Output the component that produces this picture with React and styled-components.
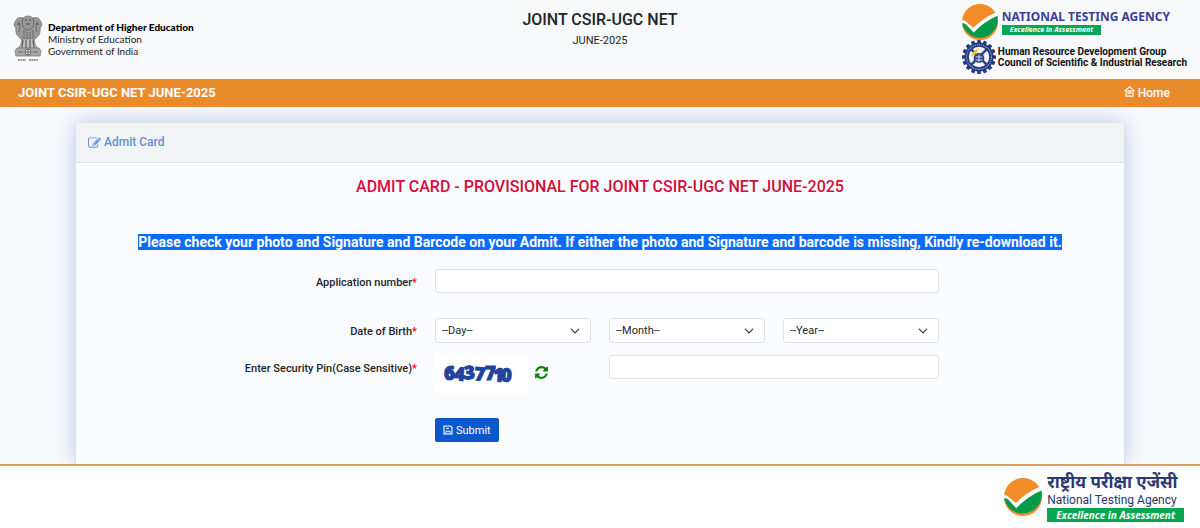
import React from "react";
import styled, { createGlobalStyle } from "styled-components";

const GlobalStyle = createGlobalStyle`
  * {
    box-sizing: border-box;
  }
  body {
    margin: 0;
    background-color: #f8f9fd;
    color: #212529;
    font-family: Roboto, "Liberation Sans", sans-serif;
    font-size: 12px;
  }
  h1, h2, p {
    margin: 0;
  }
`;

const NtaMark = ({ size }) => (
  <svg width={size} height={size} viewBox="0 0 36 36" aria-hidden="true">
    <circle cx="18" cy="18" r="18" fill="#f28c28" />
    <path d="M0 18.4 L3 18.6 L11.4 26 L35 10.4 A18 18 0 1 1 0 18.4Z" fill="#049a49" />
    <path d="M0 16.6 Q2 15.8 3.6 17.2 L11.2 23.8 Q21 14 33.6 8.4 L35.4 11.8 Q22 17.6 11.6 28.6 L4 20.4 Q2 18.6 0 19.4Z" fill="#fff" />
  </svg>
);

const Emblem = () => (
  <svg width="30" height="48" viewBox="0 0 30 48" aria-hidden="true">
    <g fill="#9a9a9a" stroke="#6a6a6a" strokeWidth="0.7">
      <path d="M10 3 Q15 -1 20 3 Q26 1 28 7 L29 10 L27 13 Q28 19 24 22 L21 25 H9 L6 22 Q2 19 3 13 L1 10 L2 7 Q4 1 10 3Z" />
      <path d="M9 24 H21 L22 29 L25 34 H5 L8 29Z" fill="#c4c4c4" />
      <path d="M4 33 H26 L28 36 L27 41 H3 L2 36Z" fill="#a9a9a9" />
    </g>
    <path d="M10 3 Q8 10 11 13 Q15 17 19 13 Q22 10 20 3 M6 6 Q8 12 6 17 M24 6 Q22 12 24 17 M11 15 V23 M14 17 V24 M17 17 V24 M20 15 V23" fill="none" stroke="#5c5c5c" strokeWidth="0.8" />
    <path d="M12 5 H14 M16 5 H18 M13 9 H17 M4 9 H6 M24 9 H26" stroke="#444" strokeWidth="1.1" />
    <path d="M10 25 L9 33 M13 25 V33 M17 25 V33 M20 25 L21 33" stroke="#666" strokeWidth="1.4" />
    <circle cx="15" cy="37" r="3" fill="#ddd" stroke="#555" strokeWidth="0.8" />
    <path d="M15 34 V40 M12 37 H18 M5 37 H10 M20 37 H25" stroke="#555" strokeWidth="0.8" />
    <path d="M5 45 H13 M16 45 H25" stroke="#777" strokeWidth="1.6" strokeDasharray="2 0.5" />
  </svg>
);

const teeth = Array.from({ length: 16 }, (_, i) => i * 22.5);

const CsirMark = () => (
  <svg width="34" height="34" viewBox="0 0 34 34" aria-hidden="true">
    {teeth.map((a) => (
      <rect key={a} x="15.2" y="0" width="3.6" height="4" rx="0.6" fill="#213a7c" transform={`rotate(${a} 17 17)`} />
    ))}
    <circle cx="17" cy="17" r="14.6" fill="#213a7c" />
    <circle cx="17" cy="17" r="12.4" fill="none" stroke="#aab7d6" strokeWidth="1.2" strokeDasharray="1 1" />
    <circle cx="17" cy="17" r="10.2" fill="#f4f6fb" />
    <path d="M9.6 9.6 L24.4 24.4 M24.4 9.6 L9.6 24.4" stroke="#2b4588" strokeWidth="2.6" />
    <ellipse cx="17" cy="18" rx="5.4" ry="5" fill="#2b4588" />
    <path d="M9.6 17 Q10 10.6 17.4 8 Q14.6 11 14.8 14 Q12 13.6 9.6 17Z" fill="#f3c11b" />
    <path d="M13.6 17 H20.4 M13.6 20 H20.4 M17 14.6 V22" stroke="#dfe5f3" strokeWidth="0.9" />
  </svg>
);

const EditIcon = () => (
  <svg width="13" height="14" viewBox="0 0 1792 1792" fill="currentColor" aria-hidden="true">
    <path d="M888 1184l116-116-152-152-116 116v56h96v96h56zm440-720q-16-16-33 1l-350 350q-17 17-1 33t33-1l350-350q17-17 1-33zm80 594v190q0 119-84.5 203.5t-203.5 84.5h-832q-119 0-203.5-84.5t-84.5-203.5v-832q0-119 84.5-203.5t203.5-84.5h832q63 0 117 25 15 7 18 23 3 17-9 29l-49 49q-14 14-32 8-23-6-45-6h-832q-66 0-113 47t-47 113v832q0 66 47 113t113 47h832q66 0 113-47t47-113v-126q0-13 9-22l64-64q15-15 35-7t20 29zm-96-738l288 288-672 672h-288v-288zm444 132l-92 92-288-288 92-92q28-28 68-28t68 28l152 152q28 28 28 68t-28 68z" />
  </svg>
);

const RefreshIcon = () => (
  <svg width="15" height="15" viewBox="0 0 1792 1792" fill="currentColor" aria-hidden="true">
    <path d="M1639 1056q0 5-1 7-64 268-268 434.5t-478 166.5q-146 0-282.5-55t-243.5-157l-129 129q-19 19-45 19t-45-19-19-45v-448q0-26 19-45t45-19h448q26 0 45 19t19 45-19 45l-137 137q71 66 161 102t187 36q134 0 250-65t186-179q11-17 53-117 8-23 30-23h192q13 0 22.5 9.5t9.5 22.5zm25-800v448q0 26-19 45t-45 19h-448q-26 0-45-19t-19-45 19-45l138-138q-148-137-349-137-134 0-250 65t-186 179q-11 17-53 117-8 23-30 23h-199q-13 0-22.5-9.5t-9.5-22.5v-7q65-268 270-434.5t480-166.5q146 0 284 55.5t245 156.5l130-129q19-19 45-19t45 19 19 45z" />
  </svg>
);

const HomeIcon = () => (
  <svg width="11" height="11" viewBox="0 0 12 12" fill="none" stroke="currentColor" aria-hidden="true">
    <path d="M0.6 5.6 L6 0.9 L11.4 5.6 M2.2 4.6 V11 H9.8 V4.6" strokeWidth="1.2" />
    <rect x="4.3" y="5.2" width="3.4" height="3" fill="currentColor" fillOpacity="0.5" strokeWidth="1" />
  </svg>
);

const SaveIcon = () => (
  <svg width="10" height="10" viewBox="0 0 10 10" fill="none" stroke="currentColor" aria-hidden="true">
    <path d="M1 1 H7.4 L9 2.6 V9 H1Z" strokeWidth="1.1" />
    <path d="M3 9 V6.2 H7 V9 M3 3.4 H6" strokeWidth="1" />
  </svg>
);

const Captcha = () => (
  <CaptchaBox viewBox="0 0 93 40" role="img" aria-label="Security pin">
    <text x="8 18 29 39 50 58 66" y="26 26 25 26 26 27 27" rotate="0 4 -4 3 0 3 4">
      6437710
    </text>
  </CaptchaBox>
);

const App = () => {
  return (
    <Page>
      <GlobalStyle />
      <Header>
        <Department>
          <Emblem />
          <div>
            <strong>Department of Higher Education</strong>
            <p>Ministry of Education</p>
            <p>Government of India</p>
          </div>
        </Department>
        <ExamTitle>
          <h1>JOINT CSIR-UGC NET</h1>
          <p>JUNE-2025</p>
        </ExamTitle>
        <Agencies>
          <Agency>
            <NtaMark size={36} />
            <div>
              <AgencyName>NATIONAL TESTING AGENCY</AgencyName>
              <Tagline>Excellence in Assessment</Tagline>
            </div>
          </Agency>
          <Council>
            <CsirMark />
            <div>
              <p>Human Resource Development Group</p>
              <p>Council of Scientific &amp; Industrial Research</p>
            </div>
          </Council>
        </Agencies>
      </Header>
      <NavBar>
        <span>JOINT CSIR-UGC NET JUNE-2025</span>
        <a href="#home">
          <HomeIcon />
          Home
        </a>
      </NavBar>
      <Main>
        <Card>
          <CardHeader>
            <EditIcon />
            Admit Card
          </CardHeader>
          <FormTitle>ADMIT CARD - PROVISIONAL FOR JOINT CSIR-UGC NET JUNE-2025</FormTitle>
          <Notice>
            <mark>
              Please check your photo and Signature and Barcode on your Admit. If either the photo and Signature and
              barcode is missing, Kindly re-download it.
            </mark>
          </Notice>
          <Form>
            <Row $space={25}>
              <Label htmlFor="appno">
                Application number<i>*</i>
              </Label>
              <Input id="appno" type="text" $span={3} />
            </Row>
            <Row $space={12}>
              <Label htmlFor="day">
                Date of Birth<i>*</i>
              </Label>
              <Select id="day" label="Day" />
              <Select id="month" label="Month" />
              <Select id="year" label="Year" />
            </Row>
            <Row $space={24}>
              <Label htmlFor="pin">
                Enter Security Pin(Case Sensitive)<i>*</i>
              </Label>
              <CaptchaCell>
                <Captcha />
                <button type="button" aria-label="Refresh security pin">
                  <RefreshIcon />
                </button>
              </CaptchaCell>
              <Input id="pin" type="text" $span={2} />
            </Row>
            <Row>
              <Submit type="submit">
                <SaveIcon />
                Submit
              </Submit>
            </Row>
          </Form>
        </Card>
      </Main>
      <Footer>
        <NtaMark size={38} />
        <div>
          <HindiName lang="hi">राष्ट्रीय परीक्षा एजेंसी</HindiName>
          <FooterName>National Testing Agency</FooterName>
          <Tagline $large>Excellence in Assessment</Tagline>
        </div>
      </Footer>
    </Page>
  );
};

const Select = ({ id, label }) => (
  <SelectWrapper>
    <select id={id} aria-label={label} defaultValue="">
      <option value="">--{label}--</option>
    </select>
    <svg width="10" height="10" viewBox="0 0 16 16" aria-hidden="true">
      <path d="m2 5 6 6 6-6" fill="none" stroke="#343a40" strokeWidth="2" strokeLinecap="round" strokeLinejoin="round" />
    </svg>
  </SelectWrapper>
);

const Page = styled.div`
  min-height: 100vh;
  display: flex;
  flex-direction: column;
`;

const Header = styled.header`
  display: grid;
  grid-template-columns: 1fr auto 1fr;
  padding: 4px 13px 5px;
  background-color: #f8f9fa;
`;

const Department = styled.div`
  display: flex;
  align-items: center;
  gap: 5px;
  color: #222;
  font-family: Lato, "Noto Sans", sans-serif;
  font-size: 10px;
  line-height: 12px;
  strong {
    color: #000;
    font-weight: 900;
  }
`;

const ExamTitle = styled.div`
  padding-top: 7px;
  text-align: center;
  h1 {
    font-size: 16px;
    font-weight: 500;
    line-height: 18px;
  }
  p {
    margin-top: 4px;
    font-size: 11px;
    line-height: 16px;
  }
`;

const Agencies = styled.div`
  justify-self: end;
`;

const Agency = styled.div`
  display: flex;
  align-items: center;
  gap: 4px;
`;

const AgencyName = styled.p`
  color: #3b3f98;
  font-family: "Noto Sans", sans-serif;
  font-size: 12px;
  font-weight: 700;
  line-height: 16px;
`;

const Tagline = styled.p`
  width: fit-content;
  padding: ${({ $large }) => ($large ? "0 9px" : "0 8px")};
  background-color: #07a652;
  color: white;
  font-family: "Open Sans", sans-serif;
  font-size: ${({ $large }) => ($large ? "10px" : "7px")};
  font-style: italic;
  font-weight: 700;
  line-height: ${({ $large }) => ($large ? "14px" : "10px")};
`;

const Council = styled.div`
  display: flex;
  align-items: center;
  gap: 2px;
  color: #111;
  font-size: 10px;
  font-weight: 700;
  line-height: 11px;
`;

const NavBar = styled.nav`
  display: flex;
  align-items: center;
  justify-content: space-between;
  padding: 0 30px 0 18px;
  background-color: #ea8b2b;
  color: white;
  font-size: 13px;
  font-weight: 700;
  line-height: 28px;
  a {
    color: white;
    font-size: 12px;
    font-weight: 500;
    text-decoration: none;
  }
  svg {
    margin-right: 3px;
  }
`;

const Main = styled.main`
  flex: 1;
  display: flex;
  overflow: hidden;
  padding: 15px 75px 0;
`;

const Card = styled.section`
  flex: 1;
  border: 1px solid #dfe2e8;
  border-bottom: none;
  border-radius: 4px 4px 0 0;
  background-color: #fbfcff;
  box-shadow: 0 0 20px #b9c8e4;
`;

const CardHeader = styled.div`
  display: flex;
  align-items: center;
  gap: 3px;
  padding: 0 12px;
  border-bottom: 1px solid #dee0e3;
  background-color: #f2f3f5;
  color: #638ddb;
  font-size: 12px;
  font-weight: 500;
  line-height: 39px;
`;

const FormTitle = styled.h2`
  margin-top: 15px;
  color: #d00f3a;
  font-size: 16px;
  font-weight: 500;
  line-height: 18px;
  text-align: center;
`;

const Notice = styled.p`
  margin-top: 37px;
  font-size: 14px;
  font-weight: 700;
  line-height: 18px;
  text-align: center;
  mark {
    background-color: #0a6cff;
    color: white;
  }
`;

const Form = styled.form`
  padding: 18px 11px 21px;
`;

const Row = styled.div`
  display: grid;
  grid-template-columns: repeat(6, 1fr);
  column-gap: 18px;
  align-items: start;
  margin-bottom: ${({ $space = 0 }) => $space}px;
`;

const Label = styled.label`
  grid-column: span 2;
  padding-top: 6px;
  font-size: 11px;
  font-weight: 500;
  line-height: 16px;
  text-align: right;
  i {
    color: red;
    font-style: normal;
  }
`;

const Input = styled.input`
  grid-column: span ${({ $span }) => $span};
  width: 100%;
  height: 24px;
  padding: 0 6px;
  border: 1px solid #dee2e6;
  border-radius: 3px;
  background-color: white;
  font: inherit;
`;

const SelectWrapper = styled.div`
  position: relative;
  select {
    width: 100%;
    height: 25px;
    padding: 0 26px 0 6px;
    border: 1px solid #dee2e6;
    border-radius: 3px;
    appearance: none;
    background-color: white;
    color: #212529;
    font-family: inherit;
    font-size: 11px;
  }
  svg {
    position: absolute;
    top: 8px;
    right: 11px;
    pointer-events: none;
  }
`;

const CaptchaCell = styled.div`
  display: flex;
  align-items: center;
  gap: 6px;
  button {
    display: flex;
    padding: 0 0 4px;
    border: none;
    background: none;
    color: #078007;
    cursor: pointer;
  }
`;

const CaptchaBox = styled.svg`
  width: 93px;
  height: 39px;
  background-color: white;
  text {
    fill: #23429a;
    stroke: #23429a;
    stroke-width: 1;
    font-family: "Open Sans", sans-serif;
    font-size: 19px;
    font-weight: 800;
  }
`;

const Submit = styled.button`
  grid-column: 3;
  justify-self: start;
  display: flex;
  align-items: center;
  gap: 3px;
  height: 24px;
  padding: 0 7px;
  border: 1px solid #0a53be;
  border-radius: 2px;
  background-color: #0b57d0;
  color: white;
  font-family: inherit;
  font-size: 11px;
  cursor: pointer;
`;

const Footer = styled.footer`
  display: flex;
  align-items: center;
  justify-content: flex-end;
  gap: 5px;
  padding: 6px 16px 6px;
  border-top: 2px solid #ea9a5b;
  background-color: white;
`;

const HindiName = styled.p`
  color: #2b3a70;
  font-family: "Noto Sans", "Noto Sans Devanagari", sans-serif;
  font-size: 17px;
  font-weight: 700;
  line-height: 20px;
`;

const FooterName = styled.p`
  color: #27356b;
  font-family: Roboto, sans-serif;
  font-size: 12px;
  line-height: 16px;
`;

export default App;
